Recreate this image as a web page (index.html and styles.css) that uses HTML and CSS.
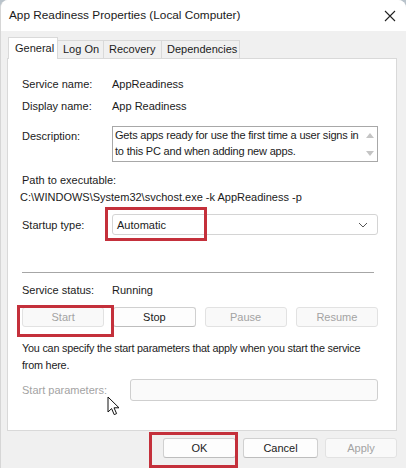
FILE: index.html
```html
<!DOCTYPE html>
<html>
<head>
<meta charset="utf-8">
<link rel="stylesheet" href="styles.css">
</head>
<body>
<div class="window">
  <div class="titlebar">
    <span class="title">App Readiness Properties (Local Computer)</span>
    <svg class="close" width="12" height="12" viewBox="0 0 12 12"><path d="M1 1L11 11M11 1L1 11" stroke="#222" stroke-width="1.1" fill="none"/></svg>
  </div>
  <div class="tabs">
    <div class="tab active">General</div>
    <div class="tab">Log On</div>
    <div class="tab">Recovery</div>
    <div class="tab">Dependencies</div>
  </div>
  <div class="panel">
    <div class="row r-name"><span class="label">Service name:</span><span>AppReadiness</span></div>
    <div class="row r-disp"><span class="label">Display name:</span><span>App Readiness</span></div>
    <div class="row r-desc">
      <span class="label desc-label">Description:</span>
      <div class="descbox">
        <div class="desctext">Gets apps ready for use the first time a user signs in to this PC and when adding new apps.</div>
        <div class="scroll">
          <svg width="8" height="6" viewBox="0 0 8 6"><path d="M0 6L4 1L8 6Z" fill="#c4c4c4"/></svg>
          <svg width="8" height="6" viewBox="0 0 8 6"><path d="M0 0L4 5L8 0Z" fill="#c4c4c4"/></svg>
        </div>
      </div>
    </div>
    <div class="path-label">Path to executable:</div>
    <div class="path-value">C:\WINDOWS\System32\svchost.exe -k AppReadiness -p</div>
    <div class="row r-startup">
      <span class="label">Startup type:</span>
      <div class="combo"><span>Automatic</span>
        <svg width="10" height="6" viewBox="0 0 10 6"><path d="M1 1L5 5L9 1" stroke="#555" stroke-width="1" fill="none"/></svg>
      </div>
    </div>
    <div class="sep"></div>
    <div class="row r-status"><span class="label">Service status:</span><span>Running</span></div>
    <div class="svc-buttons">
      <div class="btn disabled">Start</div>
      <div class="btn">Stop</div>
      <div class="btn disabled">Pause</div>
      <div class="btn disabled">Resume</div>
    </div>
    <div class="hint">You can specify the start parameters that apply when you start the service from here.</div>
    <div class="row r-params">
      <span class="label params-label">Start parameters:</span>
      <div class="paramsbox"></div>
    </div>
  </div>
  <div class="footer">
    <div class="btn fbtn">OK</div>
    <div class="btn fbtn">Cancel</div>
    <div class="btn fbtn disabled">Apply</div>
  </div>
  <div class="mark mark-startup"></div>
  <div class="mark mark-start"></div>
  <div class="mark mark-ok"></div>
  <svg class="cursor" width="14" height="21" viewBox="0 0 14 21"><path d="M1 1L1 16L4.6 12.6L7.2 18.6L9.6 17.6L7 11.8L12 11.8Z" fill="#fff" stroke="#111" stroke-width="1" stroke-linejoin="round"/></svg>
</div>
</body>
</html>
```
FILE: styles.css
```css
* { box-sizing: border-box; }
html, body { margin: 0; padding: 0; }
body {
  width: 406px;
  height: 468px;
  overflow: hidden;
  background: #b9c3cb;
  font-family: "Liberation Sans", Arial, sans-serif;
  font-size: 11px;
  color: #1b1b1b;
}
.window {
  position: relative;
  width: 406px;
  height: 468px;
  background: #f0f0f0;
  border-radius: 8px 8px 0 0;
  overflow: hidden;
  border-left: 1px solid #d6d6d6;
}
.titlebar {
  height: 31px;
  background: #fff;
  display: flex;
  align-items: center;
  justify-content: space-between;
  padding: 0 10px 1px 8px;
}
.title { font-size: 11.8px; color: #1a1a1a; }
.close { margin-top: 1px; }
.tabs {
  display: flex;
  padding-left: 7px;
  margin-top: 6px;
  height: 21px;
  align-items: flex-end;
  position: relative;
  z-index: 1;
}
.tab {
  height: 18px;
  line-height: 17px;
  padding: 0 5px;
  border: 1px solid #d9d9d9;
  border-bottom: none;
  border-left: none;
  background: #f0f0f0;
  white-space: nowrap;
}
.tab.active {
  height: 22px;
  line-height: 20px;
  margin-bottom: -1px;
  background: #fff;
  border-left: 1px solid #d9d9d9;
  padding: 0 7px 0 6px;
  width: 50px;
}
.tab:nth-child(2) { width: 46px; }
.tab:nth-child(3) { width: 58px; }
.tab:nth-child(4) { width: 78px; }
.panel {
  margin-left: 6px;
  width: 390px;
  height: 373px;
  background: #fff;
  border: 1px solid #d9d9d9;
  padding: 17px 17px 0 14px;
}
.row { display: flex; align-items: center; }
.label { width: 90px; flex: none; }
.r-name { height: 16px; }
.r-disp { height: 16px; margin-top: 6px; }
.r-desc { margin-top: 12px; align-items: flex-start; }
.desc-label { margin-top: 4px; }
.descbox {
  width: 266px;
  height: 36px;
  border: 1px solid #a8a8a8;
  display: flex;
  padding: 0 0 0 2px;
}
.desctext { flex: 1; line-height: 16px; letter-spacing: -0.2px; }
.scroll {
  width: 14px;
  display: flex;
  flex-direction: column;
  align-items: center;
  justify-content: space-between;
  padding: 5px 0 4px;
}
.path-label { margin-top: 10px; line-height: 17px; }
.path-value { line-height: 17px; margin-left: -2px; }
.r-startup { margin-top: 8px; }
.combo {
  width: 266px;
  height: 21px;
  border: 1px solid #d4d4d4;
  border-radius: 3px;
  display: flex;
  align-items: center;
  justify-content: space-between;
  padding: 0 9px 0 4px;
}
.sep {
  margin-top: 37px;
  width: 352px;
  height: 1px;
  background: #a6a6a6;
}
.r-status { margin-top: 9px; height: 16px; }
.svc-buttons {
  display: flex;
  margin-top: 9px;
  gap: 9px;
  width: 356px;
}
.btn {
  height: 20px;
  border: 1px solid #d0d0d0;
  border-bottom-color: #bdbdbd;
  border-radius: 3px;
  background: #fdfdfd;
  display: flex;
  align-items: center;
  justify-content: center;
  flex: 1;
}
.btn.disabled {
  color: #a3a3a3;
  background: #f9f9f9;
  border-color: #e2e2e2;
}
.hint { margin-top: 13px; line-height: 17px; font-size: 10.8px; letter-spacing: -0.2px; width: 350px; }
.r-params { margin-top: 5px; }
.params-label { color: #a3a3a3; width: 108px; }
.paramsbox {
  width: 248px;
  height: 22px;
  border: 1px solid #cfcfcf;
  border-radius: 3px;
  background: #fafafa;
}
.footer {
  display: flex;
  justify-content: flex-end;
  gap: 7px;
  padding: 7px 9px 0 0;
}
.fbtn { flex: none; width: 73px; }
.fbtn:nth-child(2) { width: 75px; }
.fbtn:nth-child(3) { width: 72px; }
.mark {
  position: absolute;
  border: 3px solid #c4303b;
}
.mark-startup { left: 104px; top: 207px; width: 102px; height: 34px; }
.mark-start { left: 16px; top: 305px; width: 97px; height: 32px; }
.mark-ok { left: 148px; top: 432px; width: 89px; height: 36px; }
.cursor { position: absolute; left: 106px; top: 396px; }
```
